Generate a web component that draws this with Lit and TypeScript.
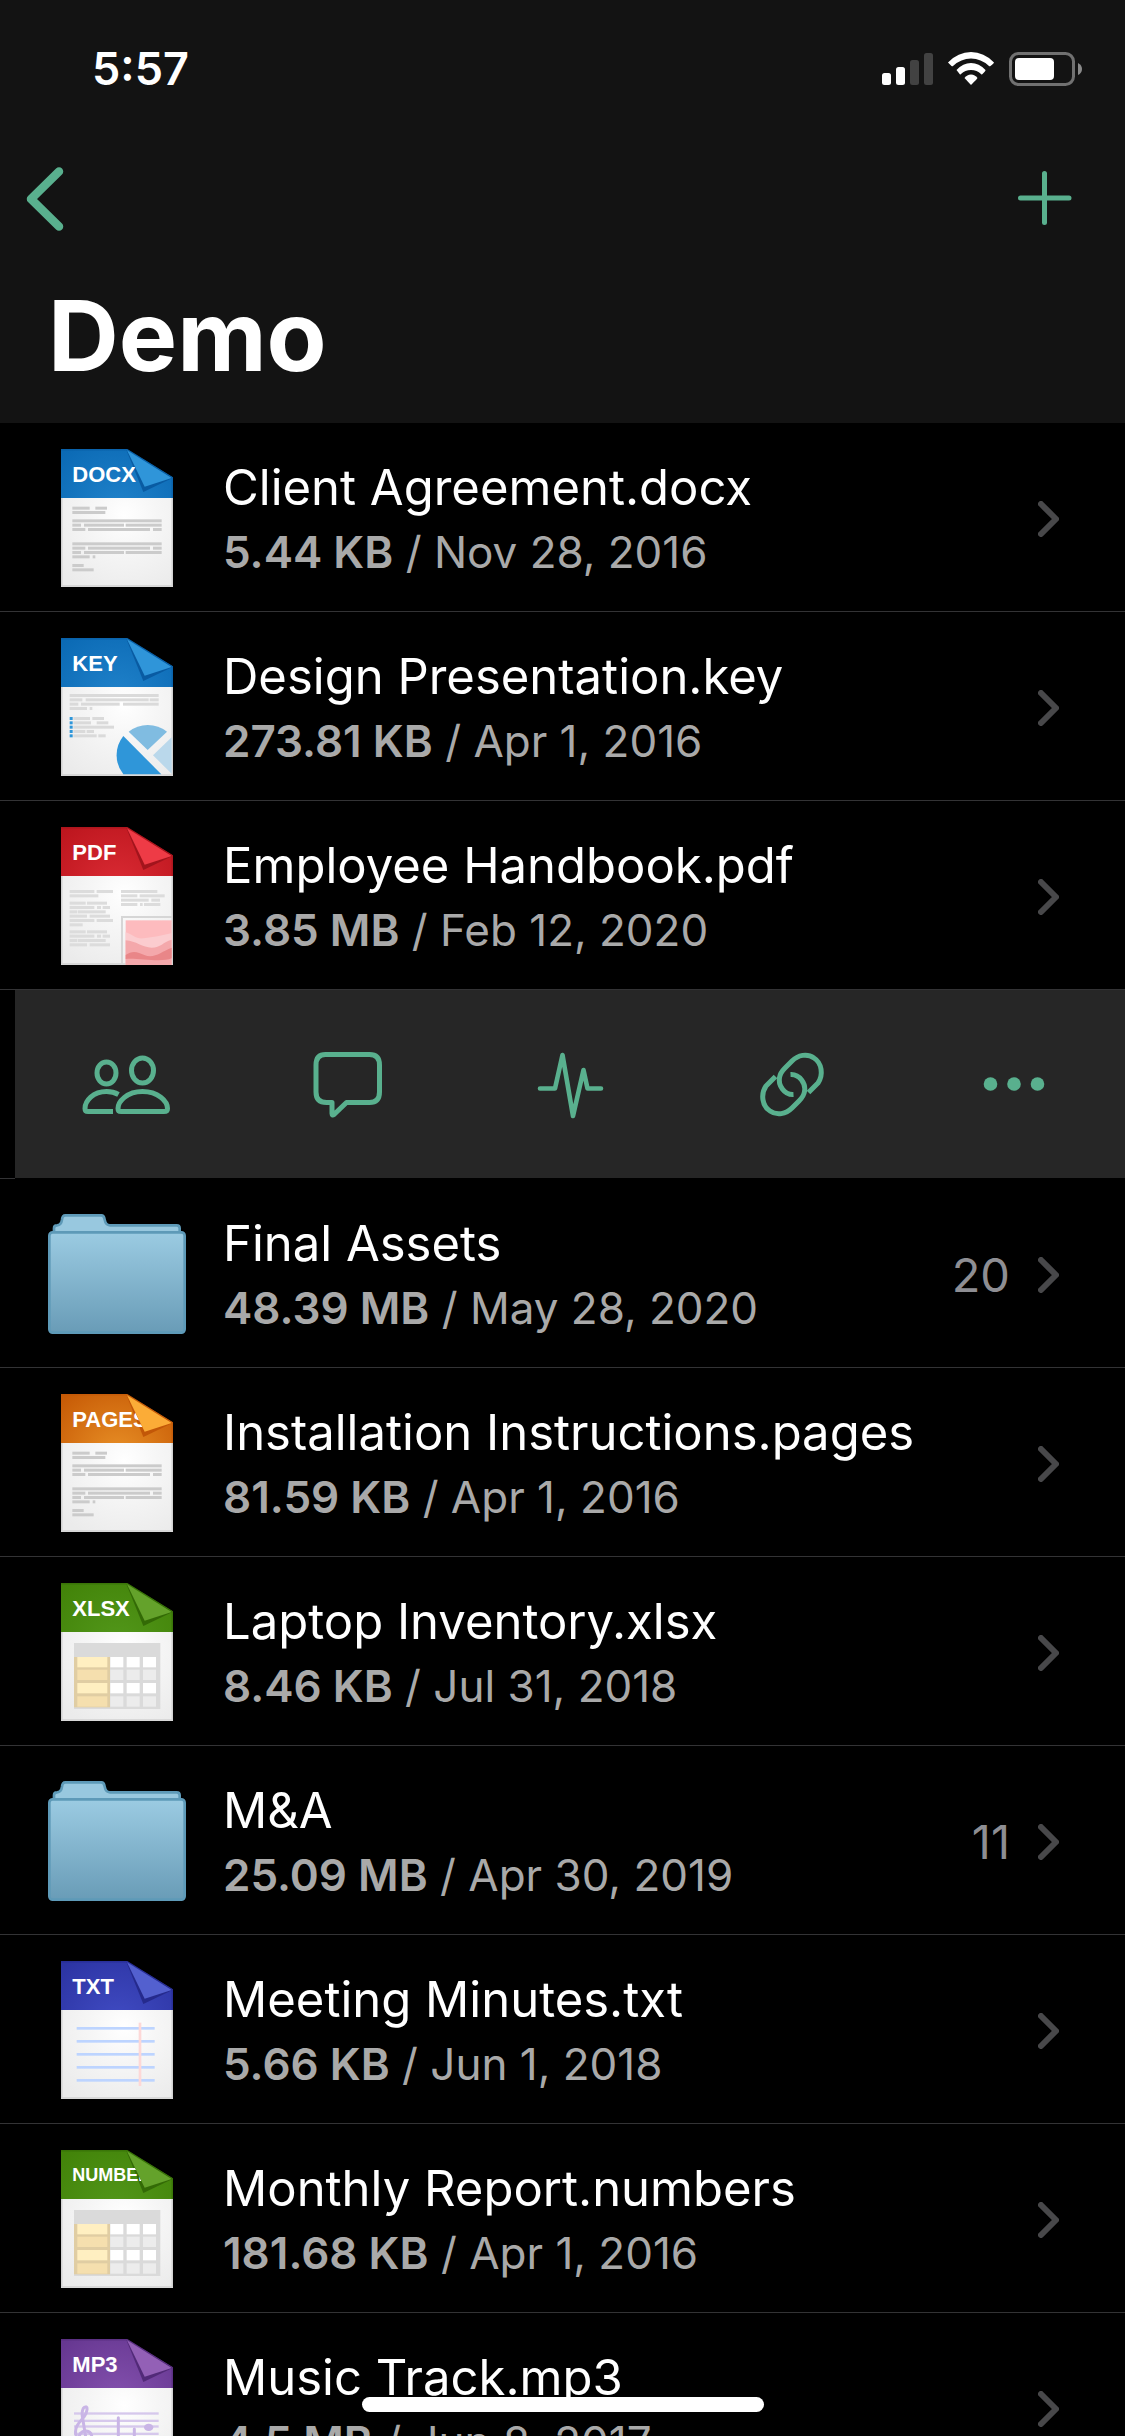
import { LitElement, html, css, svg, nothing } from "lit";
import { customElement, property } from "lit/decorators.js";

type Kind = "text" | "slides" | "report" | "sheet" | "note" | "music";
type Hue = "blue" | "red" | "orange" | "green" | "indigo" | "purple";

interface Entry {
  name: string;
  size: string;
  date: string;
  folder?: boolean;
  count?: number;
  label?: string;
  kind?: Kind;
  hue?: Hue;
}

const HUES: Record<Hue, { edge: string; glow: string; flap: string; shade: string }> = {
  blue: { edge: "#0b6ab5", glow: "#2183cb", flap: "#2f95d9", shade: "#095ba2" },
  red: { edge: "#bd161e", glow: "#dc2c35", flap: "#ee3b46", shade: "#a2141c" },
  orange: { edge: "#c75b06", glow: "#e99127", flap: "#fbac37", shade: "#c25708" },
  green: { edge: "#428309", glow: "#53981b", flap: "#64a22b", shade: "#336a06" },
  indigo: { edge: "#2c34a3", glow: "#414cc4", flap: "#5360cf", shade: "#252a8d" },
  purple: { edge: "#663791", glow: "#8552af", flap: "#9360b6", shade: "#522a78" },
};

/* Greeked text: [y, x, width, x, width, ...] */
const TEXT_LINES = [
  [173, 34, 52, 103, 35],
  [186, 34, 99],
  [211, 34, 268],
  [224, 34, 26, 69, 120, 194, 108],
  [237, 34, 39, 81, 186, 276, 26],
  [280, 34, 268],
  [293, 34, 39, 81, 186, 276, 26],
  [306, 34, 26, 69, 120, 194, 108],
  [319, 34, 52, 95, 8],
  [345, 34, 34],
  [358, 34, 64],
];
const SLIDE_LINES = [
  [168, 26, 267],
  [181, 26, 38, 74, 189, 266, 27],
  [194, 26, 26, 60, 116, 186, 107],
  [207, 26, 52, 86, 8],
  [237, 37, 50, 94, 35],
  [250, 37, 53, 107, 35],
  [263, 37, 122],
  [276, 37, 36, 77, 22],
  [289, 37, 70, 112, 22],
];
const REPORT_LINES = [
  [189, 26, 74, 107, 49, 180, 109],
  [202, 26, 86, 180, 49, 236, 75],
  [215, 180, 83, 271, 26],
  [228, 180, 49, 237, 8, 249, 49],
  [224, 26, 48, 78, 60],
  [237, 26, 74, 108, 12, 125, 22],
  [250, 26, 22, 50, 84],
  [263, 26, 52, 86, 61],
  [276, 26, 74, 107, 49],
  [289, 26, 39],
  [310, 26, 48, 78, 60],
  [323, 26, 74, 108, 12, 125, 22],
  [336, 26, 22, 50, 84],
  [349, 26, 52, 86, 61],
];

const greek = (rows: number[][], fill: string) =>
  rows.map(([y, ...runs]) =>
    runs.map((x, i) => (i % 2 ? nothing : svg`<rect x=${x} y=${y} width=${runs[i + 1]} height="9" fill=${fill}/>`))
  );

const bodies: Record<Kind, () => unknown> = {
  text: () => greek(TEXT_LINES, "#cbcbcb"),
  slides: () => svg`
    ${greek(SLIDE_LINES, "#dadada")}
    ${[237, 250, 263, 276, 289].map((y) => svg`<rect x="26" y=${y} width="9" height="9" fill="#2f96d9"/>`)}
    <path d="M187 294A92 92 0 0 0 187 409H301Z" fill="#2f96d9"/>
    <path d="M203 281A92 92 0 0 1 318 281L260 336Z" fill="#80bce1"/>
    <path d="M276 352L332 298V407Z" fill="#bad8eb"/>`,
  report: () => svg`
    ${greek(REPORT_LINES, "#dcdcdc")}
    <path d="M183 410V270H332" fill="none" stroke="#d6d6d6" stroke-width="6"/>
    <rect x="194" y="280" width="138" height="134" fill="#fdbbbe"/>
    <path d="M194 316C215 322 222 336 248 334C280 330 300 326 332 318V414H194Z" fill="#fbcccf"/>
    <path d="M194 340C225 342 245 362 272 362C300 362 305 345 332 338V414H194Z" fill="#f4a8ab"/>
    <path d="M194 384C215 368 232 376 250 384C280 396 300 374 332 362V394C300 408 230 392 194 396Z" fill="#e98688"/>`,
  sheet: () => svg`
    <rect x="39" y="180" width="259" height="198" fill="#dadada"/>
    <rect x="39" y="222" width="108" height="151" fill="#e0cda3"/>
    ${[222, 260, 300, 340].map(
      (y, i) => svg`
        <rect x="49" y=${y} width="90" height="31" fill=${i % 2 ? "#f5dfae" : "#ffefc1"}/>
        ${[148, 197, 246].map((x) => svg`<rect x=${x} y=${y} width="39" height="31" fill=${i % 2 ? "#ececec" : "#ffffff"}/>`)}`
    )}`,
  note: () => svg`
    ${[198, 237, 276, 315, 354].map((y) => svg`<rect x="47" y=${y} width="234" height="8" fill="#bdd4ff"/>`)}
    <rect x="233" y="185" width="8" height="190" fill="#fdd8d7"/>`,
  music: () => svg`
    ${[220, 242, 259, 281, 300].map((y) => svg`<rect x="39" y=${y} width="254" height="7" fill="#d6c8ec"/>`)}
    <g fill="none" stroke="#c9b5e6" stroke-width="9" stroke-linecap="round">
      <path d="M48 300L44 284C40 262 58 248 70 232C80 218 80 202 74 203C66 204 62 216 64 232L80 330"/>
      <path d="M58 300C50 288 62 274 76 276C92 278 98 296 86 308"/>
      <path d="M172 236V308M220 270V320"/>
    </g>
    <ellipse cx="162" cy="308" rx="14" ry="11" fill="#c9b5e6"/>
    <ellipse cx="263" cy="265" rx="14" ry="11" fill="#c9b5e6"/>`,
};

@customElement("file-icon")
class FileIcon extends LitElement {
  @property({ attribute: false }) entry!: Entry;

  static styles = css`
    :host {
      display: flex;
      justify-content: center;
      width: 138px;
      height: 138px;
    }
    .folder {
      width: 138px;
      height: 138px;
    }
    .page {
      width: 112px;
      height: 138px;
    }
    .label {
      font-family: "Liberation Sans", Arial, sans-serif;
      font-weight: 700;
      fill: #fff;
    }
  `;

  render() {
    if (this.entry.folder) {
      return html`<svg class="folder" viewBox="0 0 414 414" aria-hidden="true">
        <defs>
          <linearGradient id="front" x1="0" y1="0" x2="0" y2="1">
            <stop offset="0" stop-color="#9bcbe2" />
            <stop offset="1" stop-color="#699cb7" />
          </linearGradient>
        </defs>
        <path
          d="M18 84V70Q18 61 27 61Q40 60 42 44Q43 31 52 31H160Q168 31 170 44Q173 61 186 61H386Q395 61 395 70V84Z"
          fill="#98c8df"
          stroke="#5e9ab8"
          stroke-width="8"
        />
        <rect x="4" y="82" width="406" height="301" rx="10" fill="url(#front)" stroke="#5e9ab8" stroke-width="8" />
      </svg>`;
    }
    const { label = "", kind = "text", hue = "blue" } = this.entry;
    const tone = HUES[hue];
    return html`<svg class="page" viewBox="0 0 336 414" aria-hidden="true">
      <defs>
        <radialGradient id="band" gradientUnits="userSpaceOnUse" cx="170" cy="190" r="240">
          <stop offset="0" stop-color=${tone.glow} />
          <stop offset="1" stop-color=${tone.edge} />
        </radialGradient>
        <radialGradient id="paper" gradientUnits="userSpaceOnUse" cx="190" cy="200" r="250">
          <stop offset="0" stop-color="#ffffff" />
          <stop offset="0.4" stop-color="#f6f6f6" />
          <stop offset="1" stop-color="#ebebeb" />
        </radialGradient>
        <clipPath id="under-flap">
          <path d="M0 0H196L251 113L247 147H0Z" />
        </clipPath>
      </defs>
      <rect y="147" width="336" height="267" fill="url(#paper)" />
      <path d="M2 147V411H334V147" fill="none" stroke="#d2d2d2" stroke-width="5" />
      ${bodies[kind]()}
      <path d="M0 0H198L336 85V147H0Z" fill="url(#band)" />
      <path d="M0 2H198L334 87V147" fill="none" stroke=${tone.shade} stroke-width="5" opacity="0.6" />
      <path d="M196 3L247 129L336 86Z" fill=${tone.shade} />
      <g clip-path="url(#under-flap)">
        <text class="label" x="34" y=${label.length > 5 ? 94 : 100} font-size=${label.length > 5 ? 54 : 66}>${label}</text>
      </g>
      <path d="M198 4L251 113L332 87Z" fill=${tone.flap} />
    </svg>`;
  }
}

@customElement("file-row")
class FileRow extends LitElement {
  @property({ attribute: false }) entry!: Entry;

  static styles = css`
    :host {
      display: block;
    }
    .row {
      display: flex;
      align-items: center;
      padding: 26px 66px 24px 48px;
      border-bottom: 1px solid #333335;
      color: #fff;
      text-decoration: none;
    }
    .text {
      flex: 1;
      min-width: 0;
      padding: 6px 0 0 37px;
      white-space: nowrap;
    }
    .name {
      display: block;
      font-size: 49px;
      line-height: 62px;
    }
    .meta {
      display: block;
      font-size: 44px;
      line-height: 66px;
      color: #a9a9a9;
    }
    .size {
      font-weight: 600;
    }
    .count {
      padding-top: 2px;
      font-size: 47px;
      line-height: 60px;
      color: #8e8e93;
    }
    .chevron {
      width: 21px;
      height: 36px;
      margin-left: 28px;
      padding-top: 2px;
    }
  `;

  render() {
    const e = this.entry;
    return html`<a class="row" href="#">
      <file-icon .entry=${e}></file-icon>
      <span class="text">
        <span class="name">${e.name}</span>
        <span class="meta"><strong class="size">${e.size}</strong> / ${e.date}</span>
      </span>
      ${e.count === undefined ? nothing : html`<span class="count">${e.count}</span>`}
      <svg class="chevron" viewBox="0 0 21 36" aria-hidden="true">
        <path d="M3 3L18 18L3 33" fill="none" stroke="#48484a" stroke-width="6" stroke-linecap="round" stroke-linejoin="round" />
      </svg>
    </a>`;
  }
}

const ACTIONS = [
  {
    label: "Share",
    art: svg`
      <ellipse cx="30.5" cy="33" rx="9.5" ry="11"/>
      <ellipse cx="66.5" cy="30.5" rx="11" ry="12.5"/>
      <path d="M42.5 54.5C39 52.5 35 51.5 30.5 51.5C17 51.5 9 61 9 68.5Q9 71.5 12 71.5H37"/>
      <path d="M66.5 51.5C51 51.5 42 61.5 42 68.5Q42 71.5 45 71.5H88Q91.5 71.5 91.5 68.5C91.5 61 82 51.5 66.5 51.5Z"/>`,
  },
  {
    label: "Comments",
    art: svg`<path d="M27.5 14.5H71.500Q81.500 14.5 81.500 25V52Q81.500 62.5 71.500 62.5H48.500L36 74.500Q34 76 34 73.500V62.5H28.500Q18 62.5 18 52V25Q18 14.5 27.500 14.500Z"/>`,
  },
  {
    label: "Activity",
    art: svg`<path d="M20 48.500H35L42.500 15L53 76L63.500 30L67.500 48.500H81" stroke-linecap="round" stroke-width="4.600"/>`,
  },
  {
    label: "Copy link",
    art: svg`
      <path d="M48.5 34.5C58 34 64 44 62.5 51.5C62 55 60 58 57 61L50 68C44 74 35 76 28 71C20 66 18.5 54 24 46L33.5 36.5"/>
      <path d="M51.5 54.5C42 55 36 45 37.5 37.5C38 34 40 31 43 28L50 21C56 15 65 13 72 18C80 23 81.5 35 76 43L66.5 52.5"/>`,
  },
  {
    label: "More",
    art: svg`<g fill="#59b08e" stroke="none"><circle cx="26.5" cy="44" r="6.8"/><circle cx="50" cy="44" r="6.8"/><circle cx="73.5" cy="44" r="6.8"/></g>`,
  },
];

const BEFORE: Entry[] = [
  { name: "Client Agreement.docx", size: "5.44 KB", date: "Nov 28, 2016", label: "DOCX", kind: "text", hue: "blue" },
  { name: "Design Presentation.key", size: "273.81 KB", date: "Apr 1, 2016", label: "KEY", kind: "slides", hue: "blue" },
  { name: "Employee Handbook.pdf", size: "3.85 MB", date: "Feb 12, 2020", label: "PDF", kind: "report", hue: "red" },
];
const AFTER: Entry[] = [
  { name: "Final Assets", size: "48.39 MB", date: "May 28, 2020", folder: true, count: 20 },
  { name: "Installation Instructions.pages", size: "81.59 KB", date: "Apr 1, 2016", label: "PAGES", kind: "text", hue: "orange" },
  { name: "Laptop Inventory.xlsx", size: "8.46 KB", date: "Jul 31, 2018", label: "XLSX", kind: "sheet", hue: "green" },
  { name: "M&A", size: "25.09 MB", date: "Apr 30, 2019", folder: true, count: 11 },
  { name: "Meeting Minutes.txt", size: "5.66 KB", date: "Jun 1, 2018", label: "TXT", kind: "note", hue: "indigo" },
  { name: "Monthly Report.numbers", size: "181.68 KB", date: "Apr 1, 2016", label: "NUMBERS", kind: "sheet", hue: "green" },
  { name: "Music Track.mp3", size: "4.5 MB", date: "Jun 8, 2017", label: "MP3", kind: "music", hue: "purple" },
];

@customElement("app-root")
class AppRoot extends LitElement {
  static styles = css`
    :host {
      display: block;
      position: relative;
      height: 100vh;
      overflow: hidden;
      background: #000;
      color: #fff;
      font-family: Inter, "Liberation Sans", sans-serif;
    }
    .header {
      padding-bottom: 51px;
      background: #131313;
    }
    .status {
      display: flex;
      align-items: center;
      padding: 42px 43px 0 92px;
    }
    .time {
      flex: 1;
      font-size: 45px;
      line-height: 54px;
      font-weight: 600;
    }
    .indicators {
      width: 200px;
      height: 34px;
    }
    .nav {
      display: flex;
      justify-content: space-between;
      align-items: center;
      padding: 60px 44px 0 16px;
    }
    .button {
      display: flex;
      align-items: center;
      justify-content: center;
      padding: 0;
      border: 0;
      background: none;
    }
    .nav-icon {
      width: 72px;
      height: 84px;
    }
    .title {
      margin: 0;
      padding: 48px 48px 0;
      font-size: 98px;
      line-height: 96px;
      height: 84px;
      font-weight: 700;
    }
    .list {
      margin: 0;
      padding: 0;
      list-style: none;
    }
    .swiped {
      display: flex;
    }
    .peek {
      width: 15px;
      border-bottom: 1px solid #333335;
    }
    .actions {
      flex: 1;
      display: grid;
      grid-template-columns: repeat(5, 1fr);
      height: 188px;
      margin-bottom: 1px;
      background: #262626;
    }
    .action-icon {
      width: 100px;
      height: 100px;
      padding-top: 12px;
      fill: none;
      stroke: #59b08e;
      stroke-width: 5px;
      stroke-linejoin: round;
    }
    .home {
      position: absolute;
      bottom: 24px;
      left: 50%;
      width: 402px;
      height: 15px;
      margin-left: -201px;
      border-radius: 8px;
      background: #fff;
    }
  `;

  render() {
    return html`
      <header class="header">
        <div class="status">
          <span class="time">5:57</span>
          <svg class="indicators" viewBox="0 0 200 34" role="img" aria-label="Signal, Wi-Fi and battery">
            <rect x="0" y="21" width="9" height="12" rx="2.5" fill="#fff" />
            <rect x="14" y="15" width="9" height="18" rx="2.5" fill="#fff" />
            <rect x="28" y="8" width="9" height="25" rx="2.5" fill="#424242" />
            <rect x="42" y="1" width="9" height="32" rx="2.5" fill="#424242" />
            <path d="M66 10.500Q76 0 89 0Q102 0 112 10.500Q112 11 108.500 14Q107.500 14.500 107 14Q99 6.500 89 6.500Q79 6.500 71 14Q70.500 14.500 69.500 14Z" fill="#fff" />
            <path d="M74.500 18Q81 11 89 11Q97 11 103.500 18Q104 18.500 100 22.500Q99.500 22.500 99 22Q95 18 89 18Q83 18 79 22Q78.500 22.500 78 22.500Z" fill="#fff" />
            <path d="M82.500 26Q85 22.500 89 22.500Q93 22.500 95.500 26Q95.500 26.500 89.500 32.500Q89 33 88.500 32.500Z" fill="#fff" />
            <rect x="128.5" y="1.5" width="63" height="31" rx="8" fill="none" stroke="#717171" stroke-width="3" />
            <rect x="133" y="6" width="39" height="22" rx="4" fill="#fff" />
            <path d="M196 11Q200 13 200 17Q200 21 196 23Z" fill="#8a8a8a" />
          </svg>
        </div>
        <nav class="nav">
          <button class="button" aria-label="Back">
            <svg class="nav-icon" viewBox="0 0 72 84">
              <path d="M43 15.5L15 43L43 70.5" fill="none" stroke="#59b08e" stroke-width="8.5" stroke-linecap="round" stroke-linejoin="round" />
            </svg>
          </button>
          <button class="button" aria-label="Add">
            <svg class="nav-icon" viewBox="0 0 72 84">
              <path d="M35.5 17.5V66.5M11.5 42H60" fill="none" stroke="#59b08e" stroke-width="5" stroke-linecap="round" />
            </svg>
          </button>
        </nav>
        <h1 class="title">Demo</h1>
      </header>
      <ul class="list">
        ${BEFORE.map((e) => html`<li><file-row .entry=${e}></file-row></li>`)}
        <li class="swiped">
          <div class="peek"></div>
          <div class="actions">
            ${ACTIONS.map(
              (a) => html`<button class="button" aria-label=${a.label}>
                <svg class="action-icon" viewBox="0 0 100 100">${a.art}</svg>
              </button>`
            )}
          </div>
        </li>
        ${AFTER.map((e) => html`<li><file-row .entry=${e}></file-row></li>`)}
      </ul>
      <div class="home"></div>
    `;
  }
}
